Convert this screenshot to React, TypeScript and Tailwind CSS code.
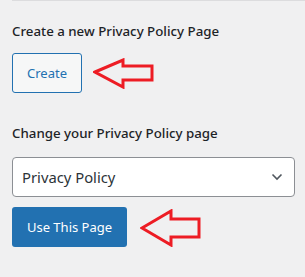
import React from "react";

function Arrow({ w, h, pts }: { w: number; h: number; pts: string }) {
  return (
    <svg width={w} height={h} viewBox={`0 0 ${w} ${h}`} className="shrink-0">
      <polygon points={pts} fill="none" stroke="#ed1c24" strokeWidth={3} strokeLinejoin="miter" />
    </svg>
  );
}

export default function App() {
  return (
    <div
      className="w-[305px] h-[277px] bg-[#f0f0f1] pl-3 overflow-hidden text-[#1d2327]"
      style={{ fontFamily: '"Noto Sans", "Open Sans", sans-serif' }}
    >
      <div className="border-t border-[#dcdcde] h-0" />
      <div className="mt-[20px] text-[13.3px] leading-[20px] font-medium">Create a new Privacy Policy Page</div>
      <div className="mt-[12px] flex items-center">
        <button className="h-[40px] w-[70px] rounded-[3px] border border-[#2271b1] bg-[#f6f7f7] text-[#2271b1] text-[13px] leading-none">
          Create
        </button>
        <div className="ml-[11px] mt-[1px]">
          <Arrow w={62} h={31} pts="2,14 30,2 30,8 59,8 59,22 30,22 30,29" />
        </div>
      </div>
      <div className="mt-[30px] text-[13.3px] leading-[20px] font-medium">Change your Privacy Policy page</div>
      <div className="mt-[14px] w-[283px] h-[40px] rounded-[4px] border border-[#8c8f94] bg-white flex items-center justify-between pl-[9px] pr-[11px]">
        <span className="text-[14.8px] text-[#2c3338]">Privacy Policy</span>
        <svg width="12" height="8" viewBox="0 0 12 8">
          <path d="M1.5 1.5 L6 6 L10.5 1.5" fill="none" stroke="#50575e" strokeWidth="1.6" />
        </svg>
      </div>
      <div className="mt-[10px] flex items-center">
        <button className="h-[40px] w-[115px] rounded-[3px] bg-[#2271b1] text-white text-[13px] leading-none">
          Use This Page
        </button>
        <div className="ml-[13px] mt-[2px]">
          <Arrow w={62} h={38} pts="2,19 31,2 31,10 59,10 59,28 31,28 31,36" />
        </div>
      </div>
    </div>
  );
}
